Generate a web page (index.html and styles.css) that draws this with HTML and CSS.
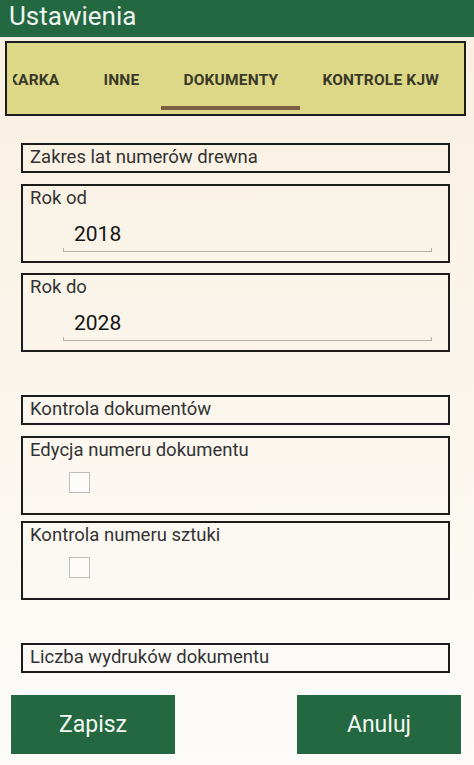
FILE: index.html
```html
<!DOCTYPE html>
<html>

<head>
    <title>Ustawienia</title>
    <meta name="viewport" content="width=device-width, initial-scale=1">
    <link rel="stylesheet" href="styles.css">
</head>

<body>
    <div id="toolbar">Ustawienia</div>

    <div id="tab-bar">
        <div class="tab-strip">
            <div class="tab-row">
                <div class="tab">KARKA</div>
                <div class="tab">INNE</div>
                <div class="tab active">DOKUMENTY</div>
                <div class="tab">KONTROLE KJW</div>
            </div>
        </div>
    </div>

    <div id="content">
        <div class="section">
            <div class="section-head">Zakres lat numerów drewna</div>
            <div class="field">
                <div class="field-label">Rok od</div>
                <div class="field-input">2018</div>
            </div>
            <div class="field">
                <div class="field-label">Rok do</div>
                <div class="field-input">2028</div>
            </div>
        </div>

        <div class="section checks">
            <div class="section-head">Kontrola dokumentów</div>
            <div class="field">
                <div class="field-label">Edycja numeru dokumentu</div>
                <div class="check"></div>
            </div>
            <div class="field">
                <div class="field-label">Kontrola numeru sztuki</div>
                <div class="check"></div>
            </div>
        </div>

        <div class="section">
            <div class="section-head">Liczba wydruków dokumentu</div>
        </div>
    </div>

    <div id="button-row">
        <button class="action-button">Zapisz</button>
        <button class="action-button">Anuluj</button>
    </div>
</body>

</html>
```

FILE: styles.css
```css
:root {
    --green: #236841;
    --tab-bg: #dcd887;
    --tab-text: #3a3928;
    --tab-underline: #7b5e41;
    --border-color: #1c1c1c;
    --label-color: #333333;
    --value-color: #151515;
}

body {
    margin: 0;
    width: 474px;
    height: 765px;
    font-family: Roboto, "Liberation Sans", sans-serif;
    background: linear-gradient(to bottom, #f8efdf, #fdfcfa);
    overflow: hidden;
}

#toolbar {
    height: 37px;
    box-sizing: border-box;
    padding-left: 9px;
    background-color: var(--green);
    color: #eef4ef;
    font-size: 26px;
    line-height: 32px;
}

#tab-bar {
    margin: 4px 8px 0 5px;
    height: 75px;
    box-sizing: border-box;
    border: 2px solid var(--border-color);
    background-color: var(--tab-bg);
}

.tab-strip {
    margin: 0 6px;
    overflow: hidden;
}

.tab-row {
    display: flex;
    margin-left: -27px;
}

.tab {
    flex: none;
    padding: 27px 22px 16px;
    font-size: 15.5px;
    font-weight: 700;
    line-height: 20px;
    letter-spacing: 0.2px;
    color: var(--tab-text);
    border-bottom: 4px solid transparent;
}

.tab.active {
    border-bottom-color: var(--tab-underline);
}

#content {
    display: flex;
    flex-direction: column;
    gap: 43px;
    padding: 27px 24px 0 21px;
}

.section {
    display: flex;
    flex-direction: column;
    gap: 10px;
}

.section .section-head {
    margin-bottom: 1px;
}

.section.checks {
    gap: 6px;
}

.section.checks .section-head {
    margin-bottom: 5px;
}

.section-head,
.field {
    border: 2px solid var(--border-color);
    padding-left: 7px;
    color: var(--label-color);
}

.section-head {
    font-size: 18.5px;
    line-height: 24px;
    padding-bottom: 2px;
}

.field-label {
    font-size: 18.5px;
    line-height: 24px;
}

.field-input {
    position: relative;
    margin: 10px 16px 9px 33px;
    padding: 0 11px 3px;
    font-size: 21px;
    line-height: 28px;
    color: var(--value-color);
    border-bottom: 1px solid #b9b1a4;
}

.field-input::before,
.field-input::after {
    content: "";
    position: absolute;
    bottom: -1px;
    width: 1px;
    height: 4px;
    background-color: #b9b1a4;
}

.field-input::before {
    left: 0;
}

.field-input::after {
    right: 0;
}

.check {
    width: 19px;
    height: 19px;
    margin: 10px 0 20px 39px;
    border: 1px solid #bdbdbd;
    background-color: #fdfcf9;
}

#button-row {
    display: flex;
    justify-content: space-between;
    padding: 21px 13px 0 11px;
}

.action-button {
    width: 164px;
    height: 59px;
    border: none;
    border-radius: 0;
    background-color: var(--green);
    color: #f3f8f3;
    font-family: Roboto, "Liberation Sans", sans-serif;
    font-size: 23px;
    padding: 0;
    cursor: pointer;
}
```
